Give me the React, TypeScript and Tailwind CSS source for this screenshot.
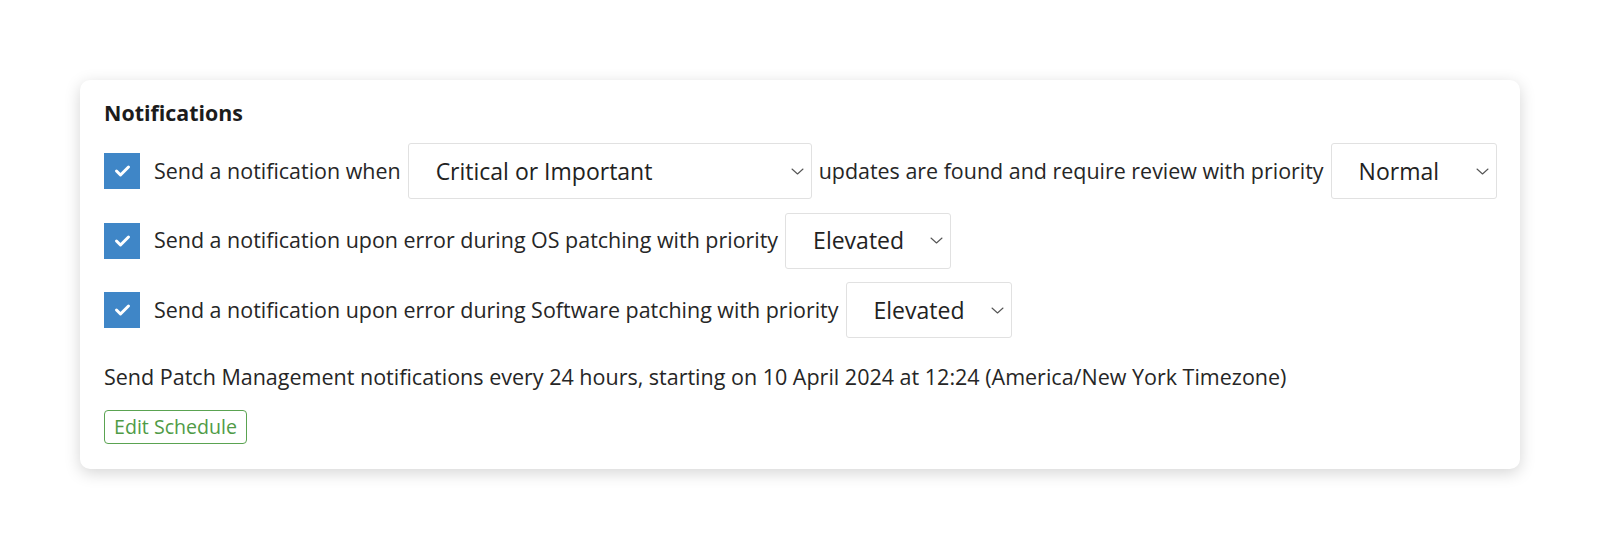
import React, { useState } from 'react';

const priorities = ['Low', 'Normal', 'Elevated', 'High', 'Urgent'];

const Chevron = () => (
  <svg width="13" height="7" viewBox="0 0 13 7" fill="none" className="shrink-0">
    <polyline points="1,1 6.5,6 12,1" stroke="#555" strokeWidth="1.1" strokeLinecap="round" strokeLinejoin="round" />
  </svg>
);

type SelectBoxProps = {
  value: string;
  width: string;
};

const SelectBox = ({ value, width }: SelectBoxProps) => (
  <div
    className={`${width} h-[56px] shrink-0 flex items-center justify-between bg-white border border-[#e1e1e1] rounded-[3px] pl-[27px] pr-[7px] text-[23px] text-[#222]`}
  >
    <span>{value}</span>
    <Chevron />
  </div>
);

const Checkbox = ({ checked, onToggle }: { checked: boolean; onToggle: () => void }) => (
  <button
    type="button"
    onClick={onToggle}
    className={`w-[36px] h-[36px] shrink-0 flex items-center justify-center ${checked ? 'bg-[#3f86c7]' : 'bg-white border border-[#bbb]'}`}
  >
    {checked && (
      <svg width="17" height="14" viewBox="0 0 17 14" fill="none">
        <polyline points="2.5,7 6.5,11 14.5,3" stroke="white" strokeWidth="3" strokeLinecap="round" strokeLinejoin="round" />
      </svg>
    )}
  </button>
);

const App = () => {
  const [checks, setChecks] = useState([true, true, true]);

  const toggle = (i: number) => setChecks((c) => c.map((v, j) => (j === i ? !v : v)));

  return (
    <div className="min-h-[548px] bg-white px-[80px] pt-[80px] font-['Open_Sans',sans-serif] text-[#262626]">
      <div className="bg-white rounded-[10px] shadow-[0_4px_16px_rgba(0,0,0,0.17)] px-[24px] pt-[18px] pb-[25px]">
        <h2 className="text-[21.4px] leading-[30px] font-bold text-[#1c1c1c] mb-[15px]">Notifications</h2>

        <div className="flex flex-col gap-[13.5px] text-[21.45px] whitespace-nowrap">
          <div className="flex items-center">
            <Checkbox checked={checks[0]} onToggle={() => toggle(0)} />
            <span className="ml-[14px]">Send a notification when</span>
            <div className="ml-[7px]">
              <SelectBox value="Critical or Important" width="w-[404px]" />
            </div>
            <span className="ml-[7px]">updates are found and require review with priority</span>
            <div className="ml-[7px]">
              <SelectBox value={priorities[1]} width="w-[166px]" />
            </div>
          </div>

          <div className="flex items-center">
            <Checkbox checked={checks[1]} onToggle={() => toggle(1)} />
            <span className="ml-[14px]">Send a notification upon error during OS patching with priority</span>
            <div className="ml-[7px]">
              <SelectBox value={priorities[2]} width="w-[166px]" />
            </div>
          </div>

          <div className="flex items-center">
            <Checkbox checked={checks[2]} onToggle={() => toggle(2)} />
            <span className="ml-[14px]">Send a notification upon error during Software patching with priority</span>
            <div className="ml-[7px]">
              <SelectBox value={priorities[2]} width="w-[166px]" />
            </div>
          </div>
        </div>

        <p className="mt-[23px] text-[21.5px] leading-[32px]">
          Send Patch Management notifications every 24 hours, starting on 10 April 2024 at 12:24 (America/New York Timezone)
        </p>

        <button
          type="button"
          className="mt-[17px] h-[34px] px-[9px] border border-[#5aa351] rounded-[4px] text-[19.6px] leading-[32px] text-[#4f9b46] bg-white"
        >
          Edit Schedule
        </button>
      </div>
    </div>
  );
};

export default App;
